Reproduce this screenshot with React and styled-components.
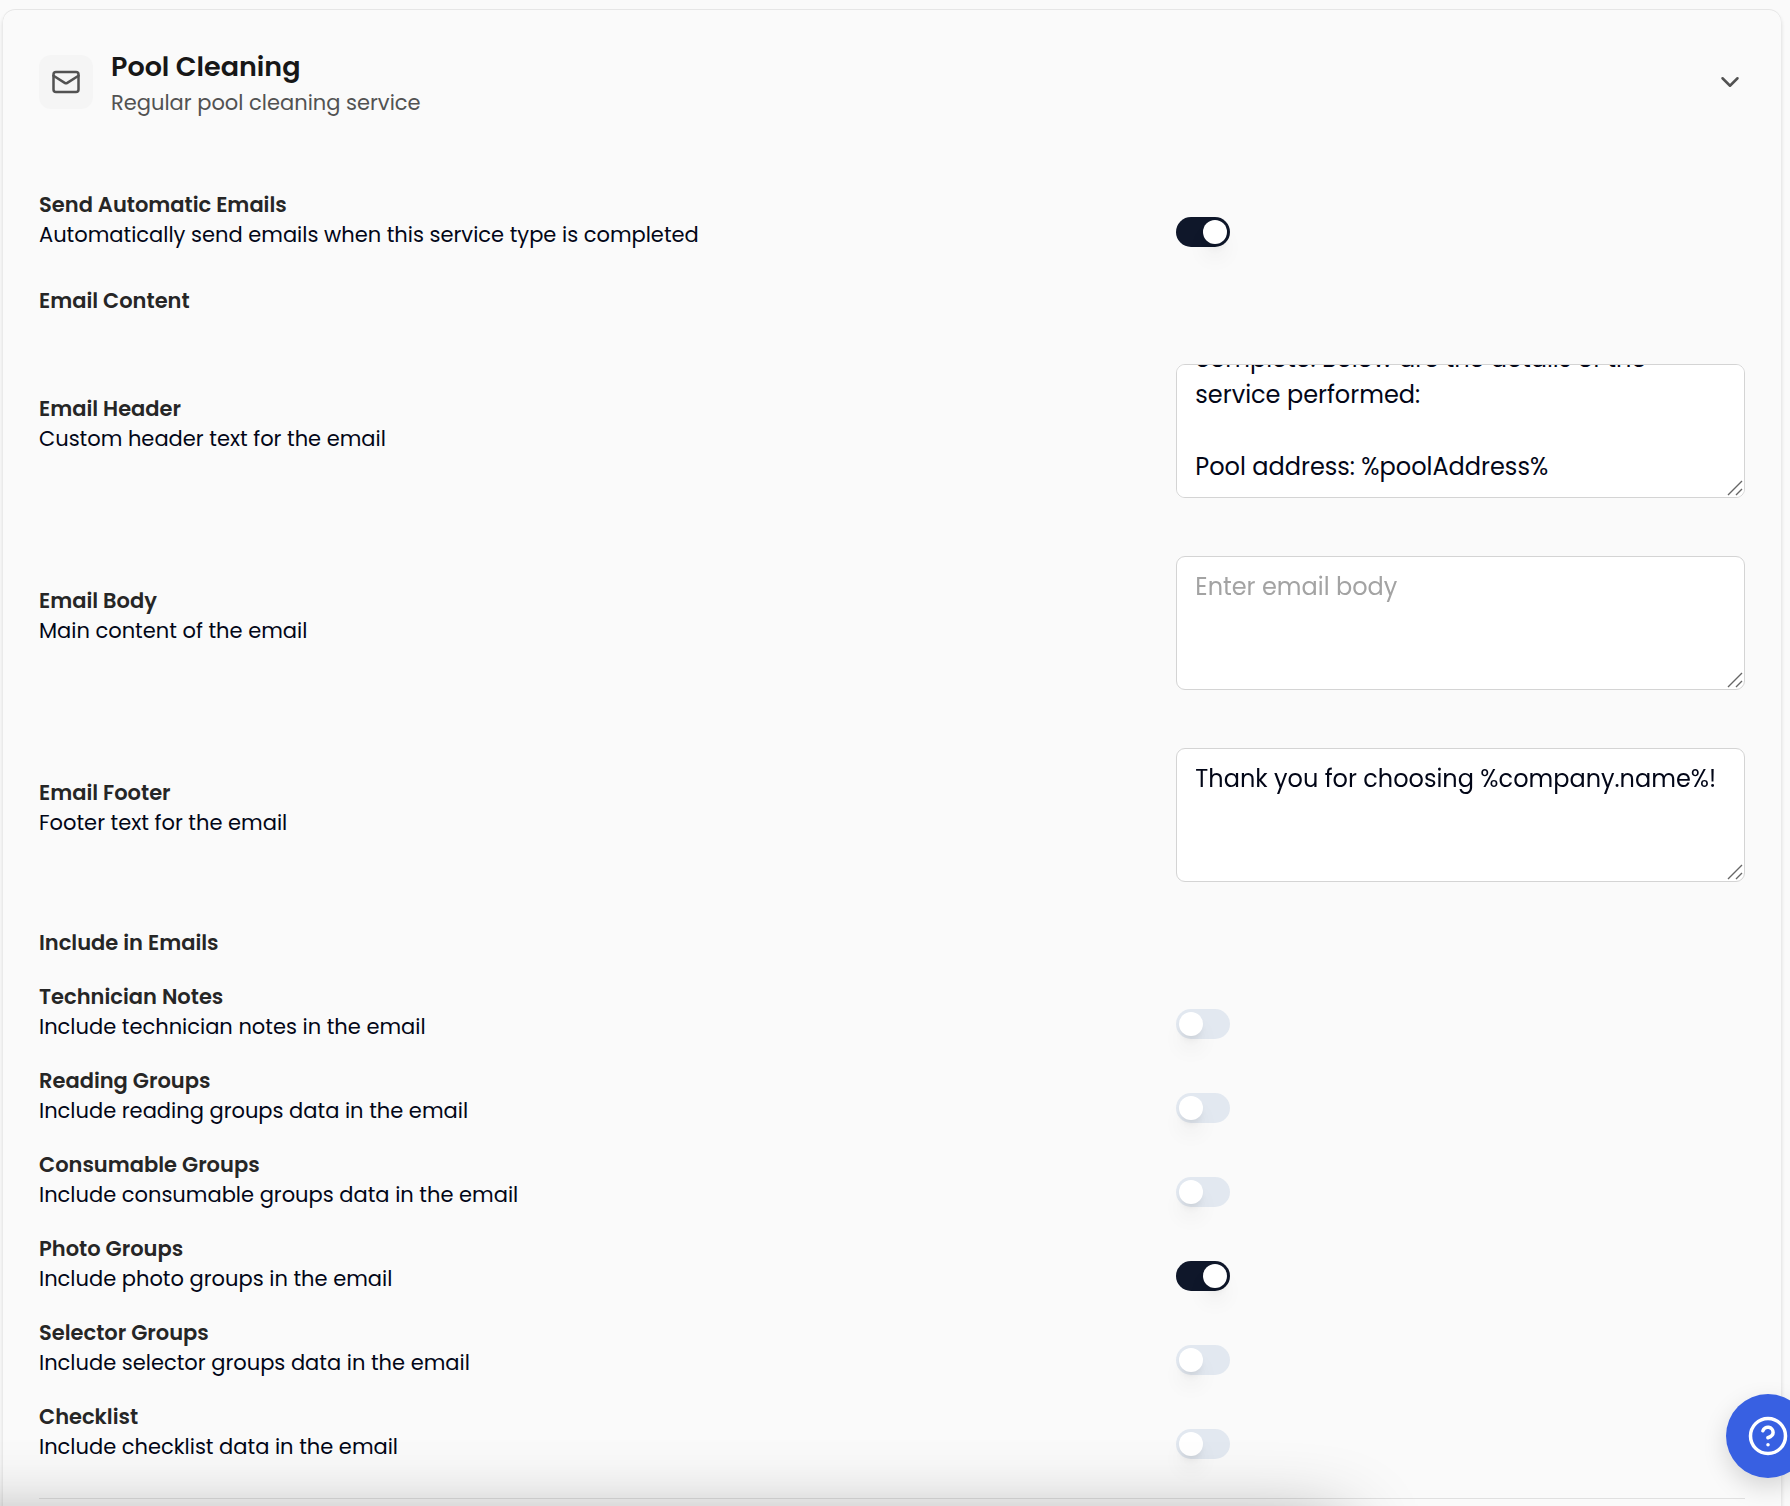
import React, { useEffect, useRef, useState } from "react";
import styled, { createGlobalStyle } from "styled-components";
import { ChevronDown } from "lucide-react";

const GlobalStyle = createGlobalStyle`
  * {
    box-sizing: border-box;
  }

  body {
    margin: 0;
    background: #fafafa;
    color: #020617;
    font-family: Poppins, Inter, sans-serif;
    font-size: 21px;
    line-height: 30px;
    overflow: hidden;
  }
`;

const Page = styled.main`
  padding: 10px 9px 0 3px;
`;

const Card = styled.section`
  padding: 36px;
  min-height: 100vh;
  border-radius: 12px;
  background: #fafafa;
  box-shadow: 0 -1px 0 rgba(0, 0, 0, 0.07), 0 3px 4px rgba(0, 0, 0, 0.16);
`;

const CardHeader = styled.header`
  display: flex;
  align-items: center;
  gap: 18px;
  padding-bottom: 72px;
`;

const IconBox = styled.div`
  display: flex;
  align-items: center;
  justify-content: center;
  width: 54px;
  height: 54px;
  border-radius: 12px;
  background: #f5f5f5;
  color: #525252;
`;

const HeaderText = styled.div`
  flex: 1;
`;

const Title = styled.h2`
  margin: 0;
  color: #171717;
  font-size: 27px;
  font-weight: 600;
  line-height: 42px;
`;

const Subtitle = styled.p`
  margin: 0;
  color: #525252;
`;

const CollapseButton = styled.button`
  display: flex;
  padding: 0;
  border: none;
  background: none;
  color: #525252;
  cursor: pointer;
`;

const Group = styled.div`
  display: grid;
  gap: ${({ $gap }) => $gap}px;
`;

const SectionTitle = styled.h3`
  margin: 0;
  padding: ${({ $padding }) => $padding};
  color: #262626;
  font-size: 21px;
  font-weight: 600;
`;

const Row = styled.div`
  display: grid;
  grid-template-columns: 2fr 1fr;
  align-items: center;
`;

const Label = styled.label`
  display: block;
  color: #262626;
  font-weight: 600;
`;

const Description = styled.p`
  margin: 0;
`;

const Switch = styled.input`
  appearance: none;
  align-self: end;
  display: flex;
  align-items: center;
  width: 54px;
  height: 30px;
  margin: 0 0 3px;
  padding: 3px;
  border-radius: 15px;
  background: #e2e8f0;
  cursor: pointer;

  &::before {
    content: "";
    width: 24px;
    height: 24px;
    border-radius: 50%;
    background: white;
    box-shadow: 0 15px 22px -4px rgba(0, 0, 0, 0.1), 0 6px 9px -4px rgba(0, 0, 0, 0.12);
  }

  &:checked {
    justify-content: flex-end;
    background: #0f172a;
  }
`;

const TextBoxWrapper = styled.div`
  position: relative;
  margin-top: 14px;
`;

const TextBox = styled.textarea`
  display: block;
  width: 100%;
  height: 134px;
  padding: 12px 18px;
  border: 1px solid #d4d4d4;
  border-radius: 9px;
  background: white;
  color: #020617;
  font-family: inherit;
  font-size: 24px;
  line-height: 36px;
  resize: vertical;
  scrollbar-width: none;

  &::placeholder {
    color: #a3a3a3;
  }

  &::-webkit-resizer {
    background: transparent;
  }
`;

const Grip = styled.svg`
  position: absolute;
  right: 2px;
  bottom: 2px;
  pointer-events: none;
`;

const Divider = styled.hr`
  margin: 36px 0;
  border: none;
  border-top: 1px solid #e0e0e0;
`;

const HelpButton = styled.button`
  position: fixed;
  right: -20px;
  bottom: 28px;
  display: flex;
  align-items: center;
  justify-content: center;
  width: 84px;
  height: 84px;
  padding: 0;
  border: none;
  border-radius: 50%;
  background: #3860e2;
  color: white;
  box-shadow: 0 9px 24px rgba(0, 0, 0, 0.15);
  cursor: pointer;
`;

// Soft shade along the bottom edge of the window
const BottomShade = styled.div`
  position: fixed;
  left: -100px;
  right: 25%;
  top: calc(100vh + 24px);
  height: 200px;
  box-shadow: 0 0 80px rgba(0, 0, 0, 0.45);
  pointer-events: none;
`;

const headerText = `Hello %customer.name%,

Your pool service is now
complete. Below are the details of the
service performed:

Pool address: %poolAddress%`;

const contentFields = [
  {
    id: "email-header",
    label: "Email Header",
    description: "Custom header text for the email",
    value: headerText,
  },
  {
    id: "email-body",
    label: "Email Body",
    description: "Main content of the email",
    placeholder: "Enter email body",
    value: "",
  },
  {
    id: "email-footer",
    label: "Email Footer",
    description: "Footer text for the email",
    value: "Thank you for choosing %company.name%!",
  },
];

const includeFields = [
  { id: "notes", label: "Technician Notes", description: "Include technician notes in the email" },
  { id: "readings", label: "Reading Groups", description: "Include reading groups data in the email" },
  { id: "consumables", label: "Consumable Groups", description: "Include consumable groups data in the email" },
  { id: "photos", label: "Photo Groups", description: "Include photo groups in the email", on: true },
  { id: "selectors", label: "Selector Groups", description: "Include selector groups data in the email" },
  { id: "checklist", label: "Checklist", description: "Include checklist data in the email" },
];

function MailIcon() {
  return (
    <svg width="30" height="30" viewBox="0 0 24 24" fill="none" stroke="currentColor" strokeWidth="2" strokeLinecap="round" strokeLinejoin="round">
      <rect x="2" y="4" width="20" height="16" rx="2" />
      <path d="m22 7-8.97 5.7a1.94 1.94 0 0 1-2.06 0L2 7" />
    </svg>
  );
}

function HelpIcon() {
  return (
    <svg width="42" height="42" viewBox="0 0 24 24" fill="none" stroke="currentColor" strokeWidth="2" strokeLinecap="round" strokeLinejoin="round">
      <circle cx="12" cy="12" r="10" />
      <path d="M9.09 9a3 3 0 0 1 5.83 1c0 2-3 3-3 3" />
      <path d="M12 17h.01" />
    </svg>
  );
}

function SwitchRow({ id, label, description, on = false }) {
  const [checked, setChecked] = useState(on);

  return (
    <Row>
      <div>
        <Label htmlFor={id}>{label}</Label>
        <Description>{description}</Description>
      </div>
      <Switch
        id={id}
        type="checkbox"
        role="switch"
        checked={checked}
        onChange={(e) => setChecked(e.target.checked)}
      />
    </Row>
  );
}

function TextRow({ id, label, description, placeholder, value }) {
  const [text, setText] = useState(value);
  const ref = useRef(null);

  // long texts open at their end
  useEffect(() => {
    ref.current.scrollTop = ref.current.scrollHeight;
  }, []);

  return (
    <Row>
      <div>
        <Label htmlFor={id}>{label}</Label>
        <Description>{description}</Description>
      </div>
      <TextBoxWrapper>
        <TextBox
          id={id}
          ref={ref}
          placeholder={placeholder}
          value={text}
          onChange={(e) => setText(e.target.value)}
        />
        <Grip width="16" height="16" viewBox="0 0 16 16" fill="none" stroke="#666666" strokeWidth="1.4" aria-hidden="true">
          <path d="M1 15 15 1M9 15l6-6" />
        </Grip>
      </TextBoxWrapper>
    </Row>
  );
}

export default function App() {
  const [open, setOpen] = useState(true);

  return (
    <>
      <GlobalStyle />
      <Page>
        <Card>
          <CardHeader>
            <IconBox>
              <MailIcon />
            </IconBox>
            <HeaderText>
              <Title>Pool Cleaning</Title>
              <Subtitle>Regular pool cleaning service</Subtitle>
            </HeaderText>
            <CollapseButton aria-label="Toggle Pool Cleaning" aria-expanded={open} onClick={() => setOpen(!open)}>
              <ChevronDown size={30} />
            </CollapseButton>
          </CardHeader>

          {open && (
            <>
              <SwitchRow
                id="auto-send"
                label="Send Automatic Emails"
                description="Automatically send emails when this service type is completed"
                on
              />
              <SectionTitle $padding="36px 0 34px">Email Content</SectionTitle>
              <Group $gap={44}>
                {contentFields.map((field) => (
                  <TextRow key={field.id} {...field} />
                ))}
              </Group>
              <SectionTitle $padding="46px 0 24px">Include in Emails</SectionTitle>
              <Group $gap={24}>
                {includeFields.map((field) => (
                  <SwitchRow key={field.id} {...field} />
                ))}
              </Group>
            </>
          )}
          <Divider />
        </Card>
      </Page>
      <BottomShade />
      <HelpButton aria-label="Help">
        <HelpIcon />
      </HelpButton>
    </>
  );
}
